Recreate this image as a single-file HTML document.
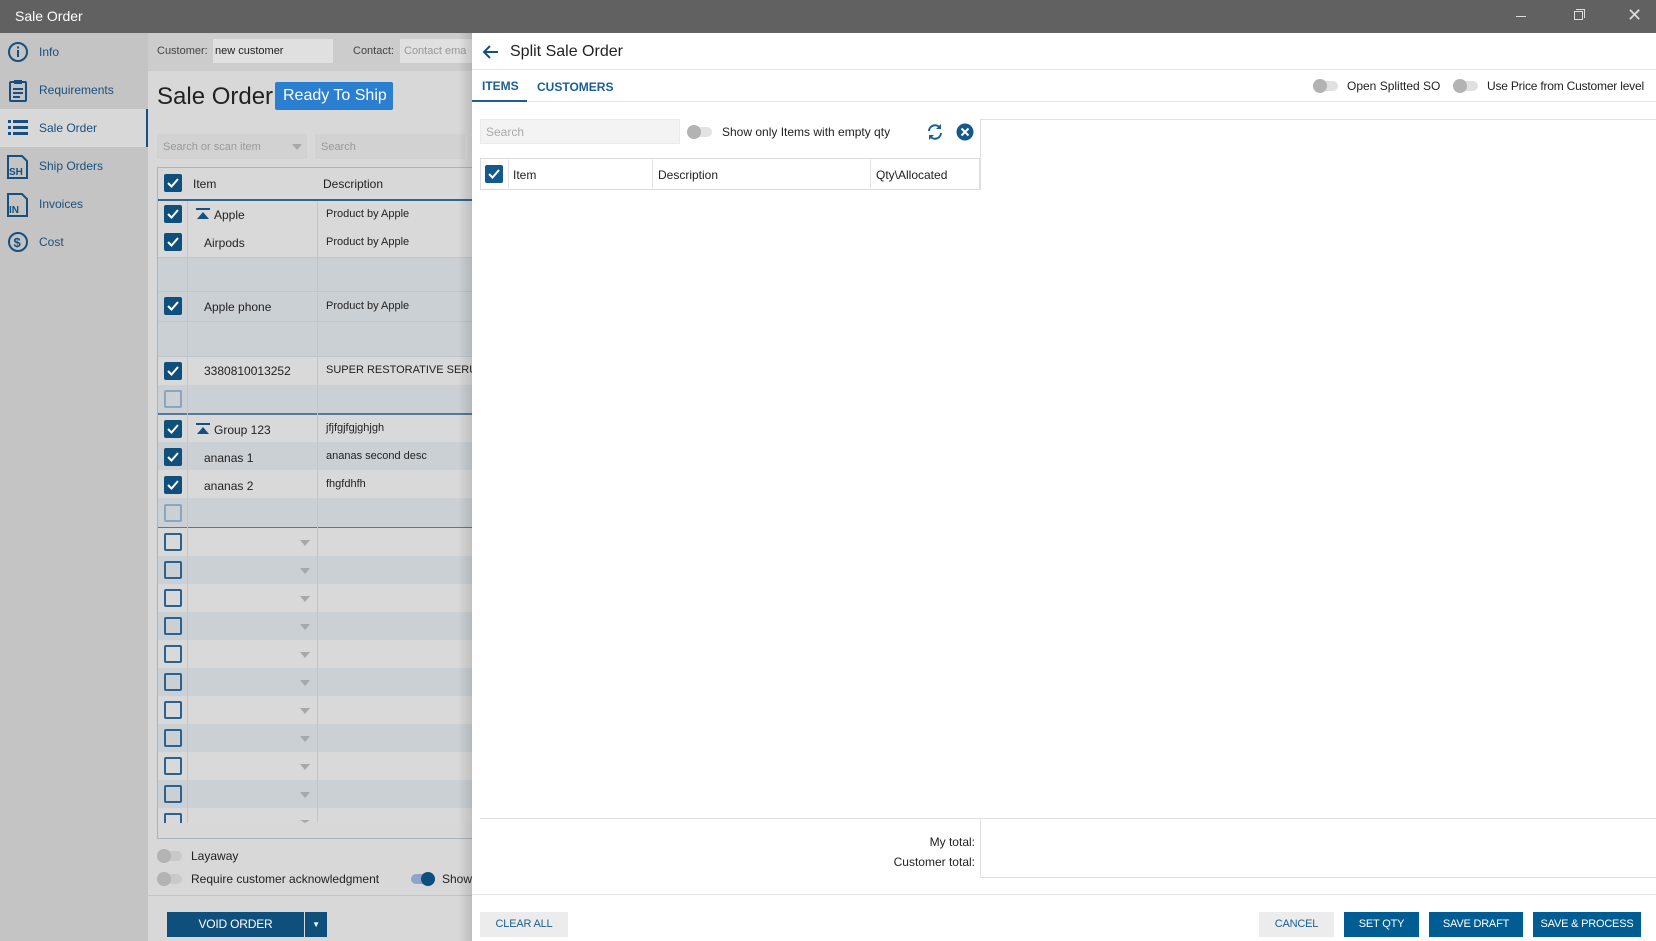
<!DOCTYPE html>
<html><head><meta charset="utf-8"><style>
*{box-sizing:border-box;margin:0;padding:0}
body{width:1656px;height:941px;overflow:hidden;position:relative;font-family:"Liberation Sans",sans-serif;background:#d8d8d8;color:#222}
.a{position:absolute}
.t{position:absolute;white-space:nowrap}
.cb{position:absolute;width:18px;height:18px;border-radius:2px;background:#0f4f7c}
.cb svg{position:absolute;left:2px;top:3px}
.ub{position:absolute;width:18px;height:18px;border-radius:2px;border:2px solid #2a6391}
.ub.l{border-color:#8aa6bf}
.tg{position:absolute;width:24px;height:10px;border-radius:5px;background:#c9c9c9}
.tg::before{content:"";position:absolute;left:-1px;top:-2px;width:14px;height:14px;border-radius:50%;background:#b3b3b3}
.btn{position:absolute;height:25px;background:#005d94;color:#fff;font-size:11px;text-align:center;line-height:25px;letter-spacing:-0.2px}
.btn.g{background:#ececec;color:#1b5f93}
.nav{position:absolute;left:0;width:148px;height:38px;font-size:12px;color:#17507e}
.nav span{position:absolute;left:39px;top:12px}
.nav svg{position:absolute;left:7px;top:8px}
.ar{position:absolute;left:300px;width:0;height:0;border-left:5px solid transparent;border-right:5px solid transparent;border-top:6px solid #a8a8a8}
</style></head><body>
<div class="a" style="left:0;top:0;width:1656px;height:33px;background:#616161"></div>
<div class="t" style="left:15px;top:8px;color:#fff;font-size:14px">Sale Order</div>
<div class="a" style="left:1516px;top:16px;width:10px;height:1px;background:#ddd"></div>
<div class="a" style="left:1574px;top:11px;width:9px;height:9px;border:1px solid #ddd"></div>
<div class="a" style="left:1576px;top:9px;width:9px;height:9px;border-top:1px solid #ddd;border-right:1px solid #ddd"></div>
<div class="t" style="left:1627px;top:5px;color:#ddd;font-size:18px">✕</div>

<div class="a" style="left:0;top:33px;width:148px;height:908px;background:#c4c4c4"></div>
<div class="a" style="left:0;top:109px;width:148px;height:38px;background:#d8d8d8;border-right:2px solid #17507e"></div>
<div class="nav" style="top:33px"><svg width="22" height="22" viewBox="0 0 22 22"><circle cx="11" cy="11" r="9" fill="none" stroke="#17507e" stroke-width="2"/><rect x="10" y="9" width="2" height="7" fill="#17507e"/><rect x="10" y="5.5" width="2" height="2" fill="#17507e"/></svg><span>Info</span></div>
<div class="nav" style="top:71px"><svg width="22" height="24" viewBox="0 0 22 24"><rect x="3" y="3" width="16" height="19" rx="1" fill="none" stroke="#17507e" stroke-width="2"/><rect x="7" y="1" width="8" height="4" fill="#17507e"/><rect x="6" y="9" width="10" height="2" fill="#17507e"/><rect x="6" y="13" width="10" height="2" fill="#17507e"/><rect x="6" y="17" width="7" height="2" fill="#17507e"/></svg><span>Requirements</span></div>
<div class="nav" style="top:109px"><svg width="22" height="22" viewBox="0 0 22 22"><g fill="#17507e"><rect x="1" y="3" width="3" height="3"/><rect x="6" y="3" width="15" height="3"/><rect x="1" y="9" width="3" height="3"/><rect x="6" y="9" width="15" height="3"/><rect x="1" y="15" width="3" height="3"/><rect x="6" y="15" width="15" height="3"/></g></svg><span>Sale Order</span></div>
<div class="nav" style="top:147px"><svg width="22" height="24" viewBox="0 0 22 24"><path d="M1 1h14l5 5v17H1z" fill="none" stroke="#17507e" stroke-width="2"/><text x="2" y="20" font-size="10" font-weight="bold" fill="#17507e" font-family="Liberation Sans">SH</text></svg><span>Ship Orders</span></div>
<div class="nav" style="top:185px"><svg width="22" height="24" viewBox="0 0 22 24"><path d="M1 1h14l5 5v17H1z" fill="none" stroke="#17507e" stroke-width="2"/><text x="2" y="20" font-size="10" font-weight="bold" fill="#17507e" font-family="Liberation Sans">IN</text></svg><span>Invoices</span></div>
<div class="nav" style="top:223px"><svg width="22" height="22" viewBox="0 0 22 22"><circle cx="11" cy="11" r="9" fill="none" stroke="#17507e" stroke-width="2"/><text x="6.5" y="16" font-size="13" font-weight="bold" fill="#17507e" font-family="Liberation Sans">$</text></svg><span>Cost</span></div>

<div class="a" style="left:148px;top:33px;width:324px;height:38px;background:#cccccc"></div>
<div class="t" style="left:157px;top:45px;font-size:11px;color:#444">Customer:</div>
<div class="a" style="left:213px;top:39px;width:120px;height:24px;background:#e0e0e0"></div>
<div class="t" style="left:215px;top:45px;font-size:11px">new customer</div>
<div class="t" style="left:353px;top:45px;font-size:11px;color:#444">Contact:</div>
<div class="a" style="left:400px;top:39px;width:72px;height:24px;background:#e0e0e0"></div>
<div class="t" style="left:404px;top:45px;font-size:11px;color:#999">Contact ema</div>
<div class="t" style="left:157px;top:83px;font-size:24px;color:#222">Sale Order</div>
<div class="a" style="left:275px;top:82px;width:118px;height:28px;background:#2a7fd0;border-radius:2px"></div>
<div class="t" style="left:283px;top:87px;font-size:16px;color:#fff">Ready To Ship</div>
<div class="a" style="left:157px;top:134px;width:150px;height:25px;background:#d2d2d2"></div>
<div class="t" style="left:163px;top:141px;font-size:11px;color:#999">Search or scan item</div>
<div class="ar" style="left:292px;top:144px"></div>
<div class="a" style="left:315px;top:134px;width:150px;height:25px;background:#d2d2d2"></div>
<div class="t" style="left:321px;top:141px;font-size:11px;color:#999">Search</div>

<div class="a" style="left:157px;top:167px;width:315px;height:672px;border:1px solid #a9b3bd;border-right:none;background:#d8d8d8"></div>
<div class="a" style="left:158px;top:199px;width:314px;height:2px;background:#2f6690"></div>
<div class="cb" style="left:164px;top:174px"><svg width="14" height="12"><path d="M2 6l3.5 3.5L12 2" stroke="#fff" stroke-width="2" fill="none"/></svg></div>
<div class="t" style="left:193px;top:177px;font-size:12px">Item</div>
<div class="t" style="left:323px;top:177px;font-size:12px">Description</div>

<div class="a" style="left:158px;top:201px;width:314px;height:56px;background:#d9d9d9"></div>
<div class="a" style="left:158px;top:257px;width:314px;height:35px;background:#cbd0d5;border-top:1px solid #c0c6cc;border-bottom:1px solid #c0c6cc"></div>
<div class="a" style="left:158px;top:292px;width:314px;height:29px;background:#cbd0d5"></div>
<div class="a" style="left:158px;top:321px;width:314px;height:36px;background:#cbd0d5;border-top:1px solid #c0c6cc;border-bottom:1px solid #c0c6cc"></div>
<div class="a" style="left:158px;top:357px;width:314px;height:28px;background:#d9d9d9"></div>
<div class="a" style="left:158px;top:385px;width:314px;height:28px;background:#cbd0d5"></div>
<div class="a" style="left:158px;top:413px;width:314px;height:2px;background:#56789a"></div>
<div class="a" style="left:158px;top:415px;width:314px;height:27px;background:#d9d9d9"></div>
<div class="a" style="left:158px;top:442px;width:314px;height:28px;background:#cbd0d5"></div>
<div class="a" style="left:158px;top:470px;width:314px;height:28px;background:#d9d9d9"></div>
<div class="a" style="left:158px;top:498px;width:314px;height:29px;background:#cbd0d5"></div>
<div class="a" style="left:158px;top:527px;width:314px;height:1px;background:#56789a"></div>
<div class="a" style="left:158px;top:528px;width:314px;height:28px;background:#d9d9d9"></div>
<div class="a" style="left:158px;top:556px;width:314px;height:28px;background:#cbd0d5"></div>
<div class="a" style="left:158px;top:584px;width:314px;height:28px;background:#d9d9d9"></div>
<div class="a" style="left:158px;top:612px;width:314px;height:28px;background:#cbd0d5"></div>
<div class="a" style="left:158px;top:640px;width:314px;height:28px;background:#d9d9d9"></div>
<div class="a" style="left:158px;top:668px;width:314px;height:28px;background:#cbd0d5"></div>
<div class="a" style="left:158px;top:696px;width:314px;height:28px;background:#d9d9d9"></div>
<div class="a" style="left:158px;top:724px;width:314px;height:28px;background:#cbd0d5"></div>
<div class="a" style="left:158px;top:752px;width:314px;height:28px;background:#d9d9d9"></div>
<div class="a" style="left:158px;top:780px;width:314px;height:28px;background:#cbd0d5"></div>
<div class="a" style="left:158px;top:808px;width:314px;height:15px;background:#d9d9d9"></div>
<div class="a" style="left:187px;top:201px;width:1px;height:622px;background:#c0c6cc"></div>
<div class="a" style="left:317px;top:201px;width:1px;height:622px;background:#c0c6cc"></div>

<div class="cb" style="left:164px;top:205px"><svg width="14" height="12"><path d="M2 6l3.5 3.5L12 2" stroke="#fff" stroke-width="2" fill="none"/></svg></div>
<div class="cb" style="left:164px;top:233px"><svg width="14" height="12"><path d="M2 6l3.5 3.5L12 2" stroke="#fff" stroke-width="2" fill="none"/></svg></div>
<div class="cb" style="left:164px;top:297px"><svg width="14" height="12"><path d="M2 6l3.5 3.5L12 2" stroke="#fff" stroke-width="2" fill="none"/></svg></div>
<div class="cb" style="left:164px;top:362px"><svg width="14" height="12"><path d="M2 6l3.5 3.5L12 2" stroke="#fff" stroke-width="2" fill="none"/></svg></div>
<div class="ub l" style="left:164px;top:390px"></div>
<div class="cb" style="left:164px;top:420px"><svg width="14" height="12"><path d="M2 6l3.5 3.5L12 2" stroke="#fff" stroke-width="2" fill="none"/></svg></div>
<div class="cb" style="left:164px;top:448px"><svg width="14" height="12"><path d="M2 6l3.5 3.5L12 2" stroke="#fff" stroke-width="2" fill="none"/></svg></div>
<div class="cb" style="left:164px;top:476px"><svg width="14" height="12"><path d="M2 6l3.5 3.5L12 2" stroke="#fff" stroke-width="2" fill="none"/></svg></div>
<div class="ub l" style="left:164px;top:504px"></div>
<div class="ub" style="left:164px;top:533px"></div>
<div class="ub" style="left:164px;top:561px"></div>
<div class="ub" style="left:164px;top:589px"></div>
<div class="ub" style="left:164px;top:617px"></div>
<div class="ub" style="left:164px;top:645px"></div>
<div class="ub" style="left:164px;top:673px"></div>
<div class="ub" style="left:164px;top:701px"></div>
<div class="ub" style="left:164px;top:729px"></div>
<div class="ub" style="left:164px;top:757px"></div>
<div class="ub" style="left:164px;top:785px"></div>
<div class="a" style="left:164px;top:813px;width:18px;height:10px;border:2px solid #2a6391;border-bottom:none;border-radius:2px 2px 0 0"></div>
<div class="ar" style="top:540px"></div><div class="ar" style="top:568px"></div><div class="ar" style="top:596px"></div><div class="ar" style="top:624px"></div><div class="ar" style="top:652px"></div><div class="ar" style="top:680px"></div><div class="ar" style="top:708px"></div><div class="ar" style="top:736px"></div><div class="ar" style="top:764px"></div><div class="ar" style="top:792px"></div><div class="ar" style="top:820px;border-top-width:3px"></div>

<svg class="a" style="left:196px;top:208px" width="14" height="12"><rect x="0" y="0" width="14" height="2" fill="#17507e"/><path d="M1 11L7 4l6 7z" fill="#17507e"/></svg>
<div class="t" style="left:214px;top:208px;font-size:12px">Apple</div>
<div class="t" style="left:204px;top:236px;font-size:12px">Airpods</div>
<div class="t" style="left:204px;top:300px;font-size:12px">Apple phone</div>
<div class="t" style="left:204px;top:364px;font-size:12px">3380810013252</div>
<svg class="a" style="left:196px;top:423px" width="14" height="12"><rect x="0" y="0" width="14" height="2" fill="#17507e"/><path d="M1 11L7 4l6 7z" fill="#17507e"/></svg>
<div class="t" style="left:214px;top:423px;font-size:12px">Group 123</div>
<div class="t" style="left:204px;top:451px;font-size:12px">ananas 1</div>
<div class="t" style="left:204px;top:479px;font-size:12px">ananas 2</div>
<div class="t" style="left:326px;top:208px;font-size:11px">Product by Apple</div>
<div class="t" style="left:326px;top:236px;font-size:11px">Product by Apple</div>
<div class="t" style="left:326px;top:300px;font-size:11px">Product by Apple</div>
<div class="t" style="left:326px;top:364px;font-size:11px">SUPER RESTORATIVE SERUM</div>
<div class="t" style="left:326px;top:422px;font-size:11px">jfjfgjfgjghjgh</div>
<div class="t" style="left:326px;top:450px;font-size:11px">ananas second desc</div>
<div class="t" style="left:326px;top:478px;font-size:11px">fhgfdhfh</div>

<div class="tg" style="left:158px;top:851px"></div>
<div class="t" style="left:191px;top:849px;font-size:12px">Layaway</div>
<div class="tg" style="left:158px;top:874px"></div>
<div class="t" style="left:191px;top:872px;font-size:12px">Require customer acknowledgment</div>
<div class="a" style="left:411px;top:874px;width:24px;height:10px;border-radius:5px;background:#8ea4cc"></div>
<div class="a" style="left:421px;top:872px;width:14px;height:14px;border-radius:50%;background:#0f4f7c"></div>
<div class="t" style="left:442px;top:872px;font-size:12px">Show</div>
<div class="a" style="left:148px;top:895px;width:324px;height:1px;background:#c4c4c4"></div>
<div class="btn" style="left:167px;top:912px;width:137px;background:#0f4f7c;font-size:12px">VOID ORDER</div>
<div class="btn" style="left:305px;top:912px;width:22px;background:#0f4f7c;font-size:8px">▼</div>

<div class="a" style="left:458px;top:33px;width:14px;height:908px;background:linear-gradient(to right,rgba(0,0,0,0),rgba(0,0,0,0.12))"></div>
<div class="a" style="left:472px;top:33px;width:1184px;height:908px;background:#fff"></div>
<svg class="a" style="left:481px;top:44px" width="18" height="16"><path d="M17 8H3M9 2L3 8l6 6" stroke="#17507e" stroke-width="2" fill="none"/></svg>
<div class="t" style="left:510px;top:43px;font-size:16px;color:#222">Split Sale Order</div>
<div class="a" style="left:472px;top:69px;width:1184px;height:1px;background:#e6e6e6"></div>
<div class="t" style="left:482px;top:79px;font-size:12px;font-weight:bold;color:#1b5f93">ITEMS</div>
<div class="t" style="left:537px;top:80px;font-size:12px;font-weight:bold;color:#1b5f93">CUSTOMERS</div>
<div class="a" style="left:472px;top:100px;width:55px;height:2px;background:#1b5f93"></div>
<div class="a" style="left:527px;top:101px;width:1129px;height:1px;background:#e6e6e6"></div>
<div class="tg" style="left:1314px;top:81px;background:#e0e0e0"></div>
<div class="t" style="left:1347px;top:79px;font-size:12px">Open Splitted SO</div>
<div class="tg" style="left:1454px;top:81px;background:#e0e0e0"></div>
<div class="t" style="left:1487px;top:79px;font-size:12px;letter-spacing:-0.2px">Use Price from Customer level</div>

<div class="a" style="left:480px;top:119px;width:200px;height:25px;background:#f3f3f3;border:1px solid #eaeaea"></div>
<div class="t" style="left:486px;top:125px;font-size:12px;color:#aaa">Search</div>
<div class="tg" style="left:688px;top:127px;background:#e3e3e3"></div>
<div class="t" style="left:722px;top:125px;font-size:12px">Show only Items with empty qty</div>
<svg class="a" style="left:926px;top:123px" width="18" height="18" viewBox="0 0 18 18"><path d="M3 8a6 6 0 0 1 11-3M15 10a6 6 0 0 1-11 3" stroke="#1b5f93" stroke-width="2" fill="none"/><path d="M15 1v5h-5z M3 17v-5h5z" fill="#1b5f93"/></svg>
<svg class="a" style="left:956px;top:123px" width="18" height="18"><circle cx="9" cy="9" r="8.5" fill="#14598c"/><path d="M5.5 5.5l7 7M12.5 5.5l-7 7" stroke="#fff" stroke-width="2"/></svg>
<div class="a" style="left:980px;top:119px;width:676px;height:1px;background:#e0e0e0"></div>
<div class="a" style="left:980px;top:119px;width:1px;height:71px;background:#e0e0e0"></div>
<div class="a" style="left:480px;top:158px;width:500px;height:32px;border:1px solid #dcdcdc"></div>
<div class="a" style="left:508px;top:158px;width:1px;height:32px;background:#e3e3e3"></div>
<div class="a" style="left:652px;top:158px;width:1px;height:32px;background:#e3e3e3"></div>
<div class="a" style="left:870px;top:158px;width:1px;height:32px;background:#e3e3e3"></div>
<div class="cb" style="left:485px;top:165px;background:#14598c"><svg width="14" height="12"><path d="M2 6l3.5 3.5L12 2" stroke="#fff" stroke-width="2" fill="none"/></svg></div>
<div class="t" style="left:513px;top:168px;font-size:12px">Item</div>
<div class="t" style="left:658px;top:168px;font-size:12px">Description</div>
<div class="t" style="left:876px;top:168px;font-size:12px">Qty\Allocated</div>

<div class="a" style="left:480px;top:818px;width:1176px;height:1px;background:#e0e0e0"></div>
<div class="a" style="left:980px;top:818px;width:1px;height:60px;background:#e0e0e0"></div>
<div class="a" style="left:980px;top:877px;width:676px;height:1px;background:#e0e0e0"></div>
<div class="t" style="left:831px;top:835px;width:144px;text-align:right;font-size:12px">My total:</div>
<div class="t" style="left:831px;top:855px;width:144px;text-align:right;font-size:12px">Customer total:</div>
<div class="a" style="left:472px;top:894px;width:1184px;height:1px;background:#e6e6e6"></div>
<div class="btn g" style="left:480px;top:912px;width:88px">CLEAR ALL</div>
<div class="btn g" style="left:1259px;top:912px;width:75px">CANCEL</div>
<div class="btn" style="left:1344px;top:912px;width:75px">SET QTY</div>
<div class="btn" style="left:1429px;top:912px;width:94px">SAVE DRAFT</div>
<div class="btn" style="left:1533px;top:912px;width:108px">SAVE &amp; PROCESS</div>
</body></html>
